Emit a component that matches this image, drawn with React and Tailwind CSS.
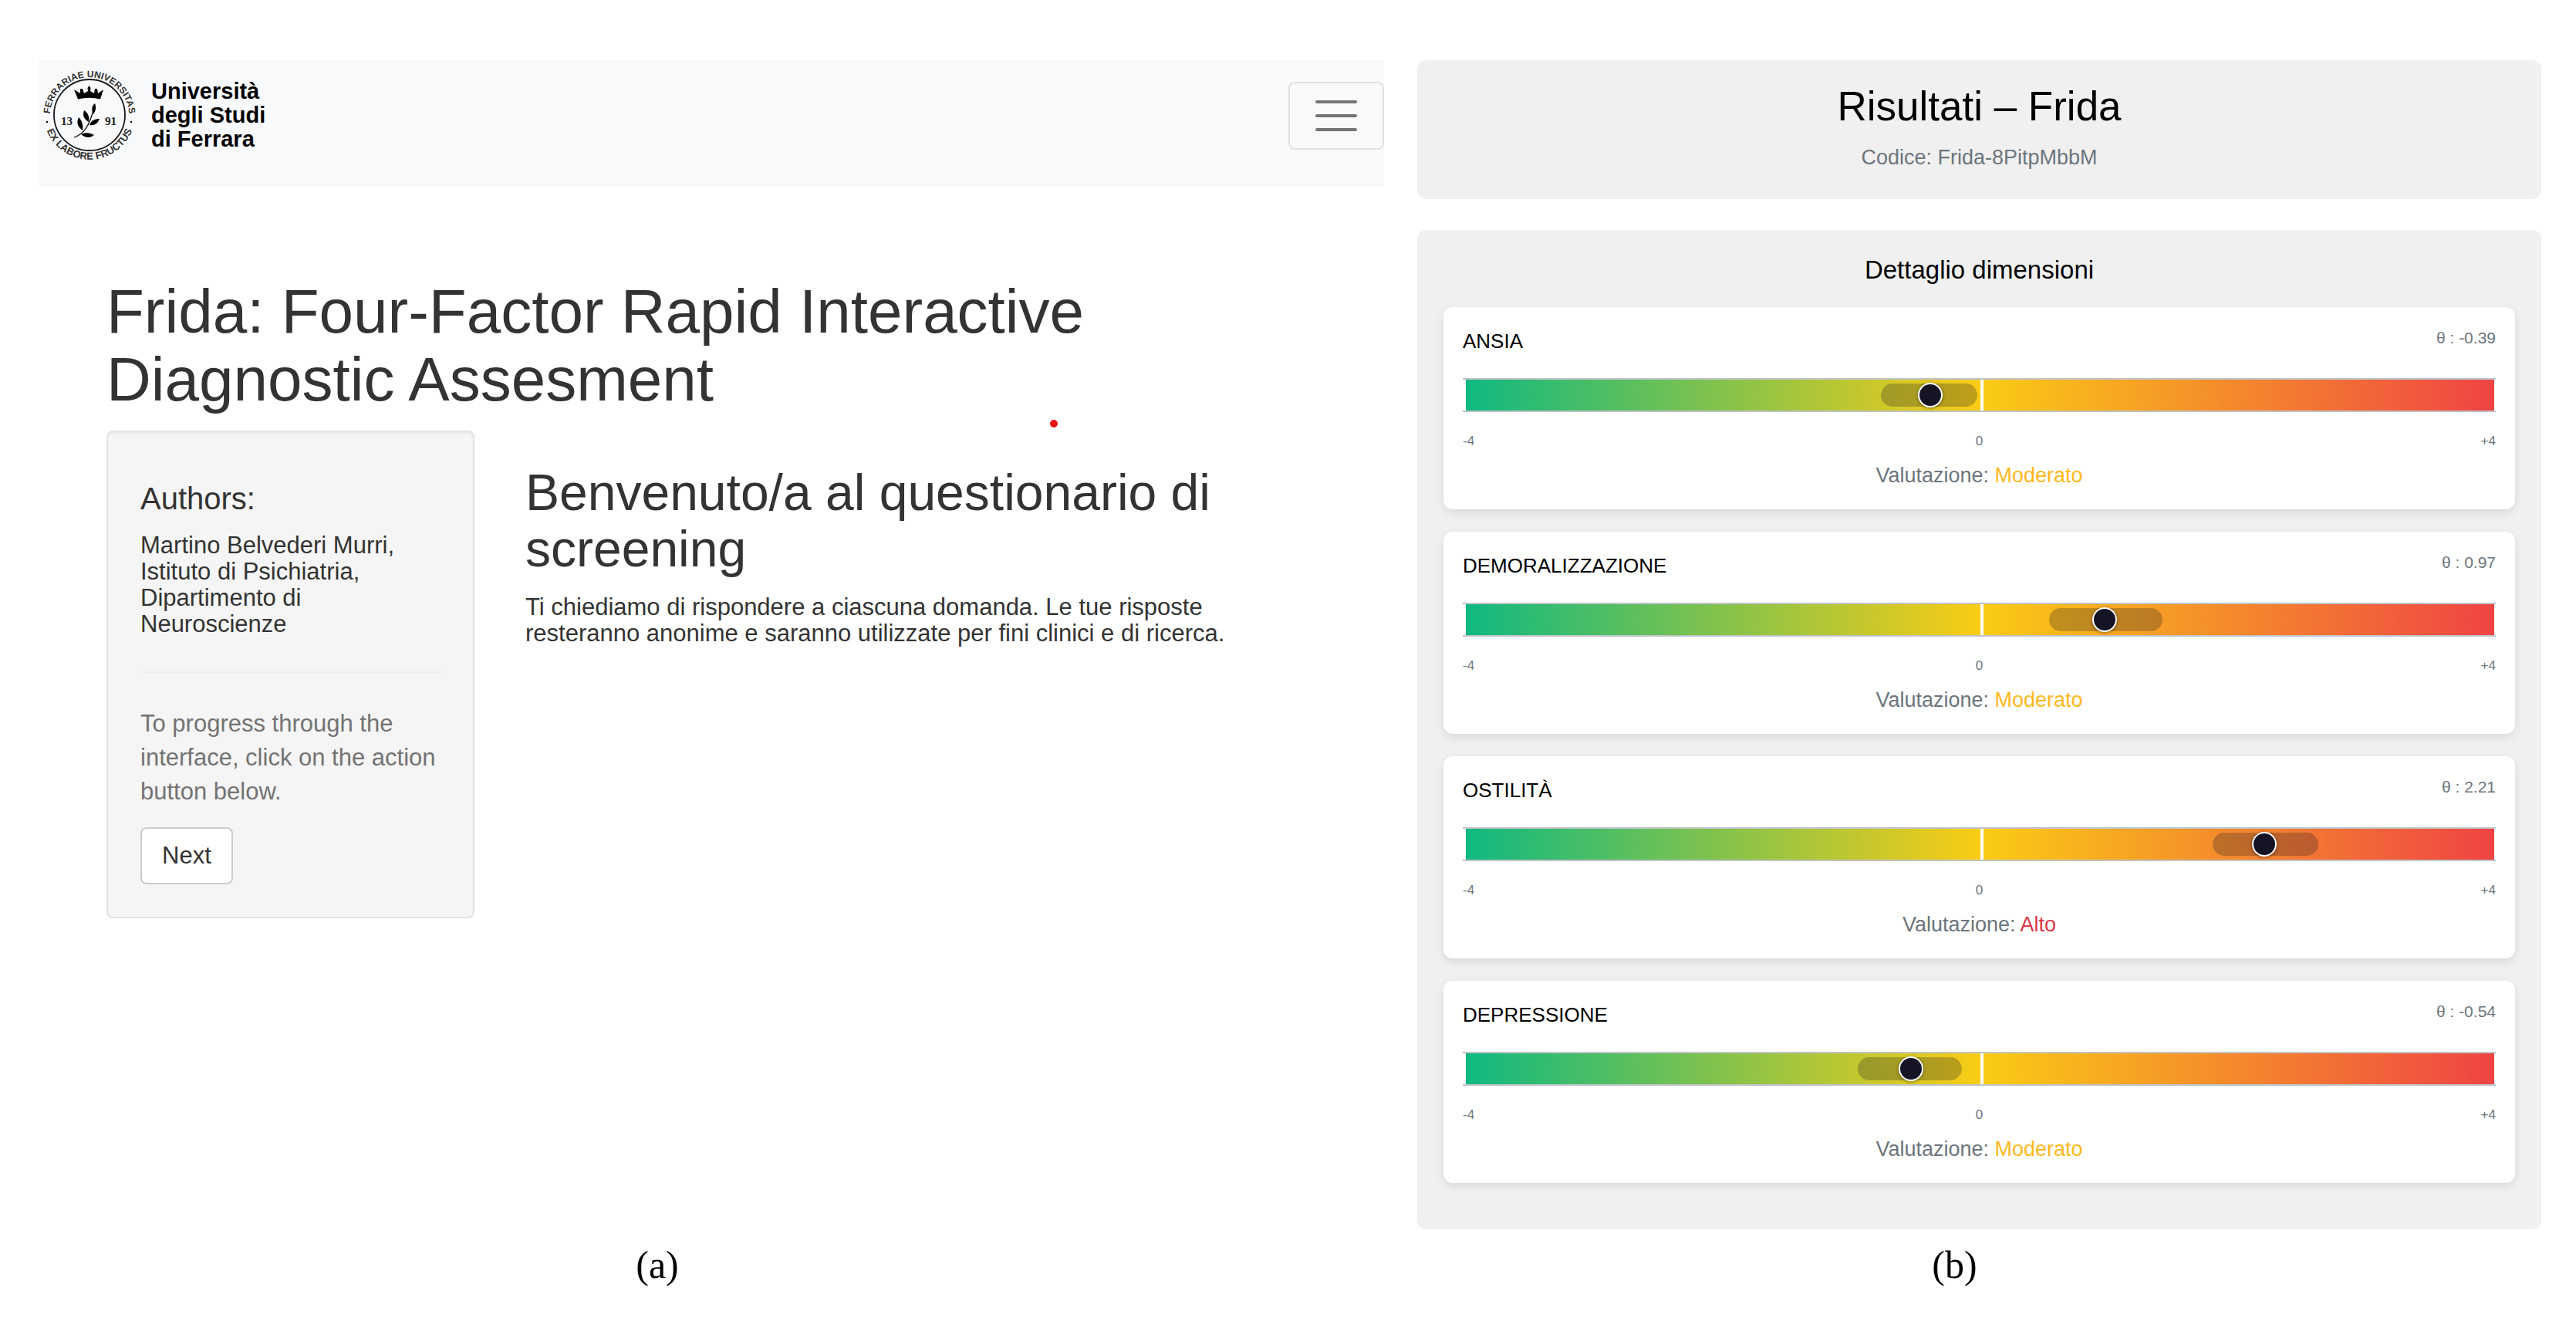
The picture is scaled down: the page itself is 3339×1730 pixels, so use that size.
import React from 'react';

const dimensions = [
    { name: 'ANSIA', theta: -0.39, low: -0.77, high: -0.02, rating: 'Moderato' },
    { name: 'DEMORALIZZAZIONE', theta: 0.97, low: 0.54, high: 1.42, rating: 'Moderato' },
    { name: 'OSTILITÀ', theta: 2.21, low: 1.81, high: 2.63, rating: 'Alto' },
    { name: 'DEPRESSIONE', theta: -0.54, low: -0.95, high: -0.14, rating: 'Moderato' },
];

// scale goes from -4 to +4
const toPercent = (value) => ((value + 4) / 8) * 100;

const Seal = () => (
    <svg viewBox="0 0 132 132" className="mt-[6px] h-[132px] w-[132px]" aria-hidden="true">
        <defs>
            <path id="seal-top" d="M 14.9 74 A 51.5 51.5 0 1 1 117.1 74" />
            <path id="seal-bottom" d="M 7.5 74 A 59.5 59.5 0 0 0 124.5 74" />
        </defs>
        <circle cx="66" cy="65" r="46" fill="none" stroke="#1a1a1a" strokeWidth="1.8" />
        <g fill="#333" fontFamily="'Liberation Sans', sans-serif" fontWeight="700">
            <text textAnchor="middle" fontSize="12">
                <textPath href="#seal-top" startOffset="50%">FERRARIAE UNIVERSITAS</textPath>
            </text>
            <text textAnchor="middle" fontSize="13">
                <textPath href="#seal-bottom" startOffset="50%">EX LABORE FRUCTUS</textPath>
            </text>
        </g>
        <circle cx="11" cy="74" r="1.2" />
        <circle cx="120" cy="74" r="1.2" />
        <path d="M46 32 L51 44.5 Q66 41 80 44.5 L84 32 L77 37 L76 31 L73 31 L72 37 L67 34 L67.5 30 L65.5 27 L63.5 30 L64 34 L59 37 L57 31 L54 31 L54 37 Z" />
        <path d="M46 94 C58 90 66 80 72 55" fill="none" stroke="#111" strokeWidth="1.3" />
        <path d="M71 64 C68 58 69 53 73 50 C75 55 74 60 71 64 Z" />
        <path d="M65 74 C58 70 57 65 59 59 C65 63 66 68 65 74 Z" />
        <path d="M57 85 C50 80 49 74 52 68 C57 73 58 79 57 85 Z" />
        <path d="M66 78 C68 72 73 70 79 70 C77 76 72 79 66 78 Z" />
        <path d="M55 90 C61 87 67 88 72 91 C67 95 61 95 55 90 Z" />
        <g fill="#222" fontFamily="'Liberation Serif', serif" fontSize="15" fontWeight="700">
            <text x="29" y="78">13</text>
            <text x="86" y="78">91</text>
        </g>
    </svg>
);

const Navbar = () => (
    <nav className="flex h-[164px] items-start justify-between bg-[#f8f9fb]">
        <a href="#" className="flex items-center text-black">
            <Seal />
            <span className="ml-[14px] pt-1 text-[29px] font-bold leading-[31px]">
                Università
                <br />
                degli Studi
                <br />
                di Ferrara
            </span>
        </a>
        <button
            type="button"
            aria-label="Menu"
            className="mt-7 flex h-[88px] w-[124px] items-center justify-center rounded-lg border-2 border-[#e0e1e3]"
        >
            <svg viewBox="0 0 54 44" className="h-11 w-[54px]" stroke="#737476" strokeWidth="4" strokeLinecap="round">
                <path d="M2 4 H52 M2 22 H52 M2 40 H52" />
            </svg>
        </button>
    </nav>
);

const Intro = () => (
    <main className="px-[88px] pt-[118px] text-[#333]">
        <h1 className="text-[80px] leading-[88px]">
            Frida: Four-Factor Rapid Interactive
            <br />
            Diagnostic Assesment
        </h1>
        <div className="relative mt-[22px] grid grid-cols-[477px_1fr] items-start">
            <aside className="rounded-lg border-2 border-[#e3e3e3] bg-[#f5f5f5] px-[42px] pb-[42px] pt-16 shadow-[inset_0_2px_2px_rgba(0,0,0,0.05)]">
                <h4 className="text-[40px] leading-11">Authors:</h4>
                <h5 className="mt-[22px] text-[31px] leading-[34px]">
                    Martino Belvederi Murri,
                    <br />
                    Istituto di Psichiatria,
                    <br />
                    Dipartimento di
                    <br />
                    Neuroscienze
                </h5>
                <hr className="my-11 border-t-2 border-[#eee]" />
                <p className="text-[31px] leading-11 text-[#737373]">
                    To progress through the
                    <br />
                    interface, click on the action
                    <br />
                    button below.
                </p>
                <button
                    type="button"
                    className="mt-6 h-[74px] rounded-lg border-2 border-[#ccc] bg-white px-[26px] text-[31px] leading-11"
                >
                    Next
                </button>
            </aside>
            <section className="pl-[66px] pt-11">
                <h2 className="text-[66px] leading-[73px]">
                    Benvenuto/a al questionario di
                    <br />
                    screening
                </h2>
                <p className="mt-[22px] text-[31px] leading-[34px]">
                    Ti chiediamo di rispondere a ciascuna domanda. Le tue risposte
                    <br />
                    resteranno anonime e saranno utilizzate per fini clinici e di ricerca.
                </p>
            </section>
            <span className="absolute -top-[14px] right-[335px] h-[10px] w-[10px] rounded-full bg-[#e81414]" />
        </div>
    </main>
);

const DimensionCard = ({ item }) => (
    <article className="h-[262px] rounded-xl bg-white px-[25px] pt-6 shadow-[0_4px_12px_rgba(0,0,0,0.1)]">
        <div className="flex h-10 items-start justify-between">
            <h3 className="text-[26px] leading-10">{item.name}</h3>
            <span className="text-[21px] leading-8 text-[#6c757d]">θ : {item.theta.toFixed(2)}</span>
        </div>
        <div className="mt-7 border-y-2 border-[#bfc3c8] pl-1 pr-[2px]">
            <div className="relative h-10 bg-[linear-gradient(90deg,#10b981_0%,#facc15_50%,#ef4444_100%)]">
                <span
                    className="absolute top-[5px] h-[30px] rounded-full bg-[#141424]/25"
                    style={{
                        left: `${toPercent(item.low)}%`,
                        width: `${toPercent(item.high) - toPercent(item.low)}%`,
                    }}
                />
                <span className="absolute left-1/2 h-full w-1 bg-white" />
                <span
                    className="absolute top-1 h-8 w-8 -translate-x-1/2 rounded-full border-2 border-white bg-[#141424] shadow-[0_1px_4px_rgba(0,0,0,0.4)]"
                    style={{ left: `${toPercent(item.theta)}%` }}
                />
            </div>
        </div>
        <div className="mt-[26px] grid grid-cols-3 text-[17px] leading-6 text-[#6c757d]">
            <span>-4</span>
            <span className="text-center">0</span>
            <span className="text-right">+4</span>
        </div>
        <p className="mt-[14px] text-center text-[27px] leading-9 text-[#6c757d]">
            Valutazione:{' '}
            <span className={item.rating === 'Alto' ? 'text-[#dc3545]' : 'text-[#ffb81c]'}>{item.rating}</span>
        </p>
    </article>
);

const Results = () => (
    <>
        <header className="h-[180px] rounded-xl bg-[#f0f0f0] pt-7 text-center">
            <h1 className="text-[53px] leading-16 text-black">Risultati – Frida</h1>
            <p className="mt-4 text-[27px] leading-9 text-[#6c757d]">Codice: Frida-8PitpMbbM</p>
        </header>
        <section className="mt-10 rounded-xl bg-[#f0f0f0] px-[34px] pb-[60px] pt-7 text-black">
            <h2 className="text-center text-[33px] leading-12">Dettaglio dimensioni</h2>
            <div className="mt-6 flex flex-col gap-[29px]">
                {dimensions.map((item) => (
                    <DimensionCard key={item.name} item={item} />
                ))}
            </div>
        </section>
    </>
);

const App = () => {
    return (
        <div className="min-h-screen bg-white pb-5 pl-[50px] pr-[45px] pt-[78px] font-['Liberation_Sans',Arial,sans-serif]">
            <div className="grid grid-cols-[1744fr_1457fr] gap-x-[43px]">
                <div>
                    <Navbar />
                    <Intro />
                </div>
                <div>
                    <Results />
                </div>
            </div>
            <div className="mt-4 grid grid-cols-[1744fr_1457fr] gap-x-[43px] text-center font-['Liberation_Serif',serif] text-[50px] leading-[60px] text-black">
                <p className="pr-[140px]">(a)</p>
                <p className="pr-16">(b)</p>
            </div>
        </div>
    );
};

export default App;
